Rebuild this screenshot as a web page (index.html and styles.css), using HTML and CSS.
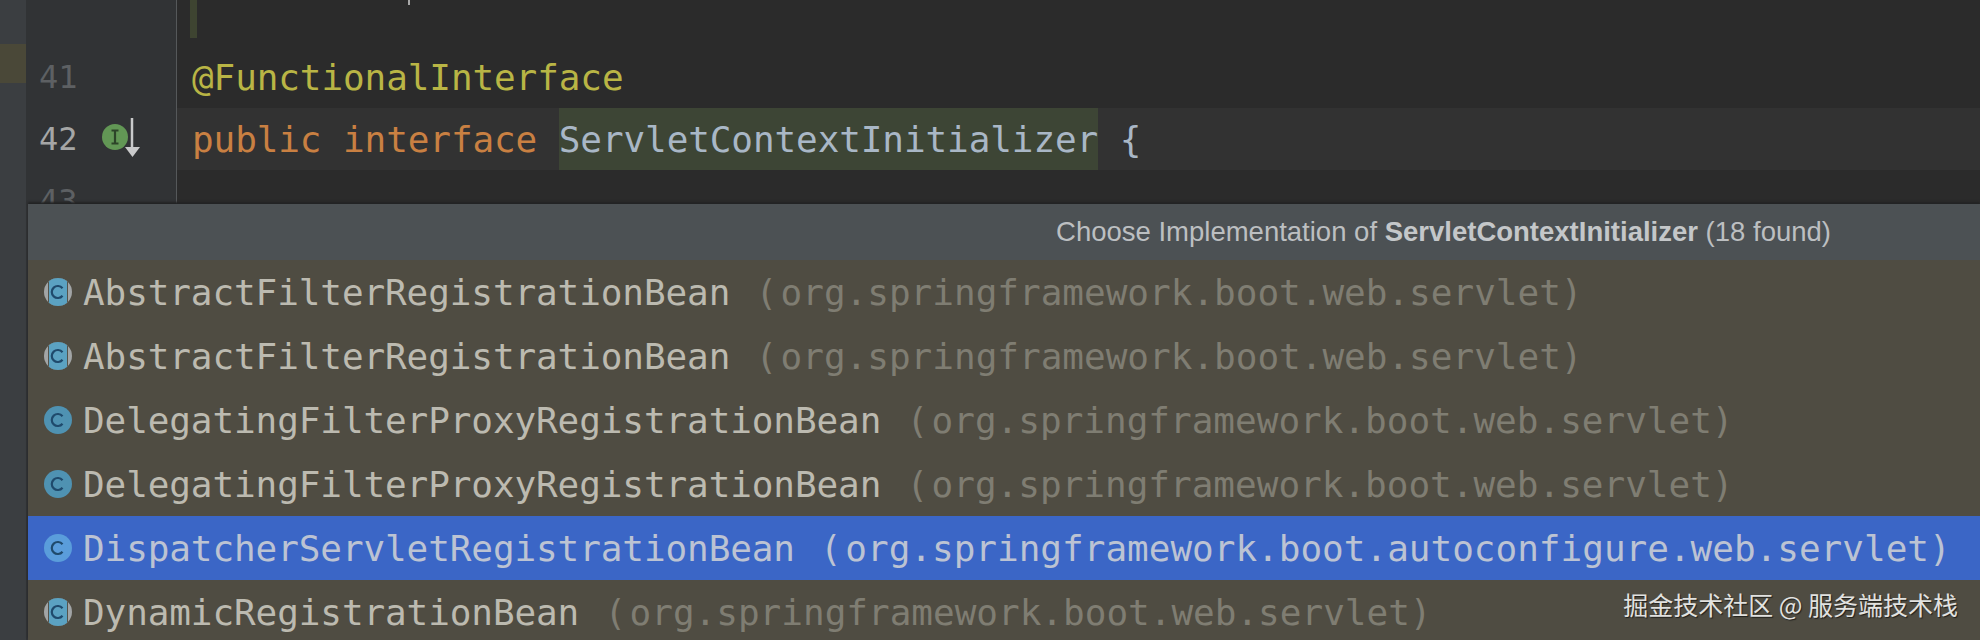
FILE: index.html
```html
<!DOCTYPE html>
<html lang="en">
<head>
<meta charset="utf-8">
<title>Choose Implementation</title>
<link rel="stylesheet" href="styles.css">
</head>
<body>
<div class="window">
  <div class="strip"><div class="strip-mark"></div></div>
  <div class="gutter">
    <div class="gutter-line"><span class="num">41</span></div>
    <div class="gutter-line"><span class="num num-current">42</span>
      <svg class="gutter-icon" width="38" height="42" viewBox="0 0 38 42">
        <circle cx="13" cy="19" r="13" fill="#629755"/>
        <path d="M9.5 12.500h7M9.5 25.500h7M13 12.500v13" fill="none" stroke="#2c4428" stroke-width="2.200"/>
        <path d="M30 0v30" fill="none" stroke="#c9cacb" stroke-width="2.500"/>
        <path d="M23 29h15l-7.500 10z" fill="#c9cacb"/>
      </svg>
    </div>
    <div class="gutter-line"><span class="num">43</span></div>
  </div>
  <div class="editor">
    <div class="above">
      <div class="change-bar"></div>
      <div class="speck"></div>
    </div>
    <div class="code-line"><span class="annotation">@FunctionalInterface</span></div>
    <div class="code-line code-current"><span class="keyword">public interface </span><span class="usage">ServletContextInitializer</span><span class="plain"> {</span></div>
  </div>

  <div class="popup">
    <div class="popup-title">
      <span>Choose Implementation of <b>ServletContextInitializer</b> (18 found)</span>
    </div>
    <div class="item">
      <svg class="cls-icon" width="28" height="28" viewBox="0 0 28 28"><circle cx="14" cy="14" r="14" class="ring"/><path d="M4 4.200A14 14 0 0 1 24 4.200V23.800A14 14 0 0 1 4 23.800Z" class="gap"/><path d="M5 3.300A14 14 0 0 1 23 3.300V24.700A14 14 0 0 1 5 24.700Z" class="band"/><path d="M18.500 10.300A6 6 0 1 0 18.500 17.700" class="c"/></svg>
      <span class="name">AbstractFilterRegistrationBean</span><span class="pkg"><span class="open"> (</span>org.springframework.boot.web.servlet)</span>
    </div>
    <div class="item">
      <svg class="cls-icon" width="28" height="28" viewBox="0 0 28 28"><circle cx="14" cy="14" r="14" class="ring"/><path d="M4 4.200A14 14 0 0 1 24 4.200V23.800A14 14 0 0 1 4 23.800Z" class="gap"/><path d="M5 3.300A14 14 0 0 1 23 3.300V24.700A14 14 0 0 1 5 24.700Z" class="band"/><path d="M18.500 10.300A6 6 0 1 0 18.500 17.700" class="c"/></svg>
      <span class="name">AbstractFilterRegistrationBean</span><span class="pkg"><span class="open"> (</span>org.springframework.boot.web.servlet)</span>
    </div>
    <div class="item">
      <svg class="cls-icon" width="28" height="28" viewBox="0 0 28 28"><circle cx="14" cy="14" r="14" class="disc"/><path d="M18.500 10.300A6 6 0 1 0 18.500 17.700" class="c"/></svg>
      <span class="name">DelegatingFilterProxyRegistrationBean</span><span class="pkg"><span class="open"> (</span>org.springframework.boot.web.servlet)</span>
    </div>
    <div class="item">
      <svg class="cls-icon" width="28" height="28" viewBox="0 0 28 28"><circle cx="14" cy="14" r="14" class="disc"/><path d="M18.500 10.300A6 6 0 1 0 18.500 17.700" class="c"/></svg>
      <span class="name">DelegatingFilterProxyRegistrationBean</span><span class="pkg"><span class="open"> (</span>org.springframework.boot.web.servlet)</span>
    </div>
    <div class="item item-selected">
      <svg class="cls-icon" width="28" height="28" viewBox="0 0 28 28"><circle cx="14" cy="14" r="14" class="disc"/><path d="M18.500 10.300A6 6 0 1 0 18.500 17.700" class="c"/></svg>
      <span class="name">DispatcherServletRegistrationBean</span><span class="pkg"><span class="open"> (</span>org.springframework.boot.autoconfigure.web.servlet)</span>
    </div>
    <div class="item">
      <svg class="cls-icon" width="28" height="28" viewBox="0 0 28 28"><circle cx="14" cy="14" r="14" class="ring"/><path d="M4 4.200A14 14 0 0 1 24 4.200V23.800A14 14 0 0 1 4 23.800Z" class="gap"/><path d="M5 3.300A14 14 0 0 1 23 3.300V24.700A14 14 0 0 1 5 24.700Z" class="band"/><path d="M18.500 10.300A6 6 0 1 0 18.500 17.700" class="c"/></svg>
      <span class="name">DynamicRegistrationBean</span><span class="pkg"><span class="open"> (</span>org.springframework.boot.web.servlet)</span>
    </div>
  </div>

  <div class="watermark">掘金技术社区 @ 服务端技术栈</div>
</div>
</body>
</html>
```

FILE: styles.css
```css
html, body {
  margin: 0;
  padding: 0;
  background: #2b2b2b;
}

.window {
  position: relative;
  display: flex;
  width: 1980px;
  height: 640px;
  overflow: hidden;
  font-family: "DejaVu Sans Mono", "Liberation Mono", monospace;
  font-size: 36px;
  background: #2b2b2b;
}

.strip {
  flex: 0 0 26px;
  padding-top: 44px;
  background: #3b3e41;
}

.strip-mark {
  height: 39px;
  background: #4a4838;
}

.gutter {
  flex: 0 0 151px;
  box-sizing: border-box;
  padding-top: 46px;
  background: #313335;
  border-right: 1px solid #55585a;
}

.gutter-line {
  display: flex;
  align-items: center;
  height: 62px;
  padding-left: 13px;
}

.num {
  width: 39px;
  font-size: 32px;
  color: #5d6063;
}

.num-current {
  color: #a5a6a6;
}

.gutter-icon {
  flex: none;
  margin-left: 24px;
}

.editor {
  flex: 1;
  min-width: 0;
}

.above {
  display: flex;
  align-items: flex-start;
  height: 46px;
  padding-left: 13px;
}

.change-bar {
  width: 7px;
  height: 38px;
  background: #3e4431;
}

.speck {
  width: 2px;
  height: 5px;
  margin-left: 211px;
  background: #a8a8a8;
}

.code-line {
  display: flex;
  align-items: center;
  height: 62px;
  padding-left: 15px;
  white-space: pre;
  letter-spacing: -0.1px;
}

.code-current {
  background: #323232;
}

.annotation {
  color: #b9b545;
}

.keyword {
  color: #c98042;
}

.usage {
  align-self: stretch;
  display: flex;
  align-items: center;
  background: #3d4535;
  color: #a9b7c6;
}

.plain {
  color: #a9b7c6;
}

.popup {
  position: absolute;
  left: 28px;
  top: 204px;
  right: 0;
  bottom: 0;
  background: #4f4c42;
  box-shadow: 0 -2px 2px #222324;
}

.popup-title {
  display: flex;
  justify-content: flex-end;
  align-items: center;
  height: 56px;
  padding-right: 149px;
  background: #4c5154;
  font-family: "Liberation Sans", Arial, sans-serif;
  font-size: 27.5px;
  color: #bcbfc1;
}

.popup-title b {
  font-weight: bold;
  color: #c4c7c9;
}

.item {
  display: flex;
  align-items: center;
  height: 64px;
  padding-left: 16px;
  white-space: pre;
}

.cls-icon {
  flex: none;
  margin-right: 11px;
}

.name {
  color: #bcbab0;
  letter-spacing: -0.1px;
}

.pkg {
  color: #7f7d72;
}

.open {
  letter-spacing: 3.5px;
}

.item-selected {
  background: #3b66c6;
}

.item-selected .name,
.item-selected .pkg {
  color: #bcc3d3;
}

.ring {
  fill: #a2a5a6;
}

.gap {
  fill: #55534a;
}

.band {
  fill: #5ba2c2;
}

.disc {
  fill: #4f92b2;
}

.item-selected .disc {
  fill: #5a9ddb;
}

.c {
  fill: none;
  stroke: #1f4a6c;
  stroke-width: 2.200;
}

.watermark {
  position: absolute;
  right: 22px;
  bottom: 18px;
  font-family: "Noto Sans CJK SC", "Noto Sans", sans-serif;
  font-size: 25px;
  line-height: 36px;
  color: #e2e2e0;
  text-shadow: 1px 1px 1px #1f1f1c;
}
```
